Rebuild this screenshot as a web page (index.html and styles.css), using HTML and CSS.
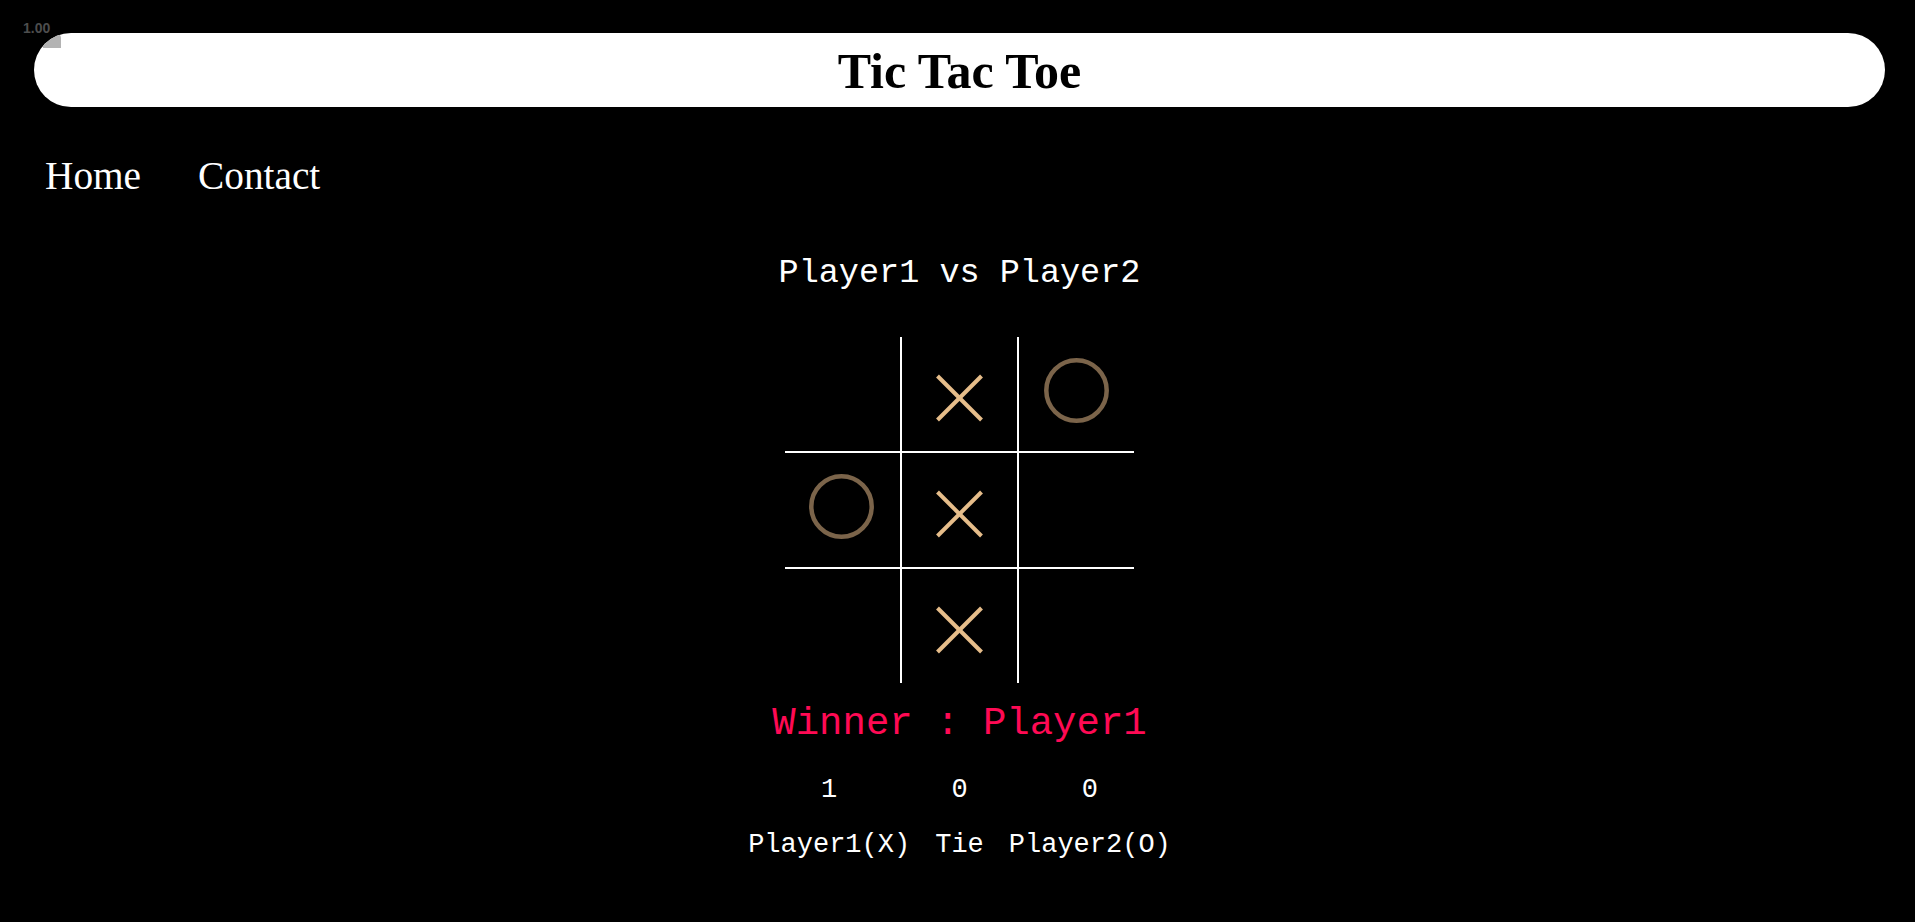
FILE: index.html
```html
<!DOCTYPE html>
<html lang="en">
<head>
<meta charset="utf-8">
<title>Tic Tac Toe</title>
<link rel="stylesheet" href="styles.css">
</head>
<body>
<div class="zoom-badge">1.00</div>
<div class="page">
  <header class="title-bar">
    <span class="corner-tab"></span>
    <h1 class="title">Tic Tac Toe</h1>
  </header>
  <nav class="nav">
    <a class="nav-link" href="#">Home</a>
    <a class="nav-link" href="#">Contact</a>
  </nav>
  <main class="game">
    <div class="versus">Player1 vs Player2</div>
    <div class="board">
      <div class="cell"></div>
      <div class="cell"><svg class="mark" viewBox="0 0 115 114"><line class="x-line" x1="35.5" y1="39" x2="79.5" y2="83"/><line class="x-line" x1="79.5" y1="39" x2="35.5" y2="83"/></svg></div>
      <div class="cell"><svg class="mark" viewBox="0 0 115 114"><circle class="o-ring" cx="57.5" cy="53.5" r="30.2"/></svg></div>
      <div class="cell"><svg class="mark" viewBox="0 0 115 114"><circle class="o-ring" cx="56.5" cy="53.5" r="30.2"/></svg></div>
      <div class="cell"><svg class="mark" viewBox="0 0 115 114"><line class="x-line" x1="35.5" y1="39" x2="79.5" y2="83"/><line class="x-line" x1="79.5" y1="39" x2="35.5" y2="83"/></svg></div>
      <div class="cell"></div>
      <div class="cell"></div>
      <div class="cell"><svg class="mark" viewBox="0 0 115 114"><line class="x-line" x1="35.5" y1="39" x2="79.5" y2="83"/><line class="x-line" x1="79.5" y1="39" x2="35.5" y2="83"/></svg></div>
      <div class="cell"></div>
    </div>
    <div class="winner">Winner : Player1</div>
    <div class="scores">
      <div class="score-col"><span class="score-num">1</span><span class="score-label">Player1(X)</span></div>
      <div class="score-col"><span class="score-num">0</span><span class="score-label">Tie</span></div>
      <div class="score-col"><span class="score-num">0</span><span class="score-label">Player2(O)</span></div>
    </div>
  </main>
</div>
</body>
</html>
```
FILE: styles.css
```css
html, body {
  margin: 0;
  padding: 0;
  background: #000;
}
body {
  min-height: 922px;
  color: #fff;
  font-family: "Liberation Serif", "Times New Roman", serif;
  position: relative;
}
.zoom-badge {
  position: absolute;
  left: 23px;
  top: 20px;
  font-family: "Liberation Sans", Arial, sans-serif;
  font-weight: bold;
  font-size: 14px;
  line-height: 16px;
  color: #4d4d4d;
  z-index: 2;
}
.page {
  padding: 33px 30px 0 34px;
}
.title-bar {
  position: relative;
  overflow: hidden;
  height: 74px;
  border-radius: 37px;
  background: #fff;
  display: flex;
  align-items: center;
  justify-content: center;
}
.corner-tab {
  position: absolute;
  left: 9px;
  top: 0;
  width: 18px;
  height: 15px;
  background: #b3b3b3;
  border-top-right-radius: 5px;
}
.title {
  margin: 0;
  font-size: 50px;
  line-height: 74px;
  font-weight: bold;
  color: #000;
  padding-top: 2px;
}
.nav {
  margin-top: 46px;
  padding-left: 11px;
  display: flex;
  gap: 57px;
  line-height: 46px;
}
.nav-link {
  color: #fff;
  text-decoration: none;
  font-size: 39.3px;
}
.game {
  display: flex;
  flex-direction: column;
  align-items: center;
  font-family: "Courier New", "Nimbus Mono PS", "Nimbus Mono L", FreeMono, "Liberation Mono", monospace;
}
.versus {
  margin-top: 54px;
  font-size: 33.5px;
  line-height: 40px;
  color: #fff;
}
.board {
  margin-top: 44px;
  display: grid;
  grid-template-columns: repeat(3, 115px);
  grid-template-rows: repeat(3, 114px);
  gap: 2px;
  background: #fff;
  overflow: hidden;
}
.cell {
  background: #000;
}
.mark {
  display: block;
  width: 115px;
  height: 114px;
}
.x-line {
  stroke: #e6bd8a;
  stroke-width: 4;
  stroke-linecap: butt;
}
.o-ring {
  fill: none;
  stroke: #7b644a;
  stroke-width: 4.5;
}
.winner {
  margin-top: 18px;
  font-size: 39px;
  line-height: 46px;
  color: #ff0a54;
}
.scores {
  margin-top: 27px;
  display: flex;
  gap: 25px;
  font-size: 27px;
  line-height: 32px;
  color: #fff;
}
.score-col {
  display: flex;
  flex-direction: column;
  align-items: center;
  gap: 23px;
}
```
